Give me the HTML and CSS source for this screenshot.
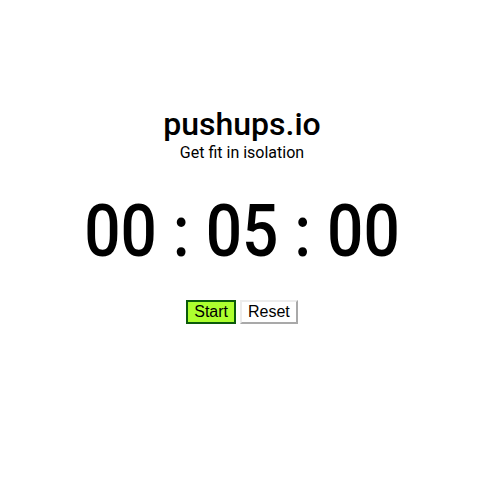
FILE: index.html
```html
<!DOCTYPE html>
<html>
<head>
<meta charset="utf-8">
<link rel="stylesheet" href="styles.css">
</head>
<body>
<div class="app">
  <h1 class="title">pushups.io</h1>
  <p class="subtitle">Get fit in isolation</p>
  <div class="timer">00 : 05 : 00</div>
  <div class="controls">
    <button class="btn btn-start">Start</button>
    <button class="btn btn-reset">Reset</button>
  </div>
</div>
</body>
</html>
```
FILE: styles.css
```css
html, body {
  margin: 0;
  padding: 0;
  background: #ffffff;
}
body {
  font-family: Roboto, "Liberation Sans", sans-serif;
  color: #000;
}
.app {
  width: 484px;
  display: flex;
  flex-direction: column;
  align-items: center;
  padding-top: 105px;
}
.title {
  margin: 0;
  font-size: 32px;
  font-weight: 500;
  line-height: 38px;
}
.subtitle {
  margin: 0;
  font-size: 16px;
  line-height: 19px;
}
.timer {
  margin-top: 30px;
  font-size: 64px;
  font-weight: 500;
  line-height: 80px;
  transform: scaleY(1.14);
}
.controls {
  margin-top: 28px;
  display: flex;
  gap: 4px;
}
.btn {
  font-family: "Liberation Sans", Arial, sans-serif;
  font-size: 16px;
  line-height: 18px;
  padding: 1px 6px;
  margin: 0;
  color: #000;
}
.btn-start {
  background: #adff2f;
  border: 2px solid #0a5a0a;
}
.btn-reset {
  background: #fff;
  border: 2px solid;
  border-color: #ececec #a9a9a9 #a9a9a9 #ececec;
}
```
